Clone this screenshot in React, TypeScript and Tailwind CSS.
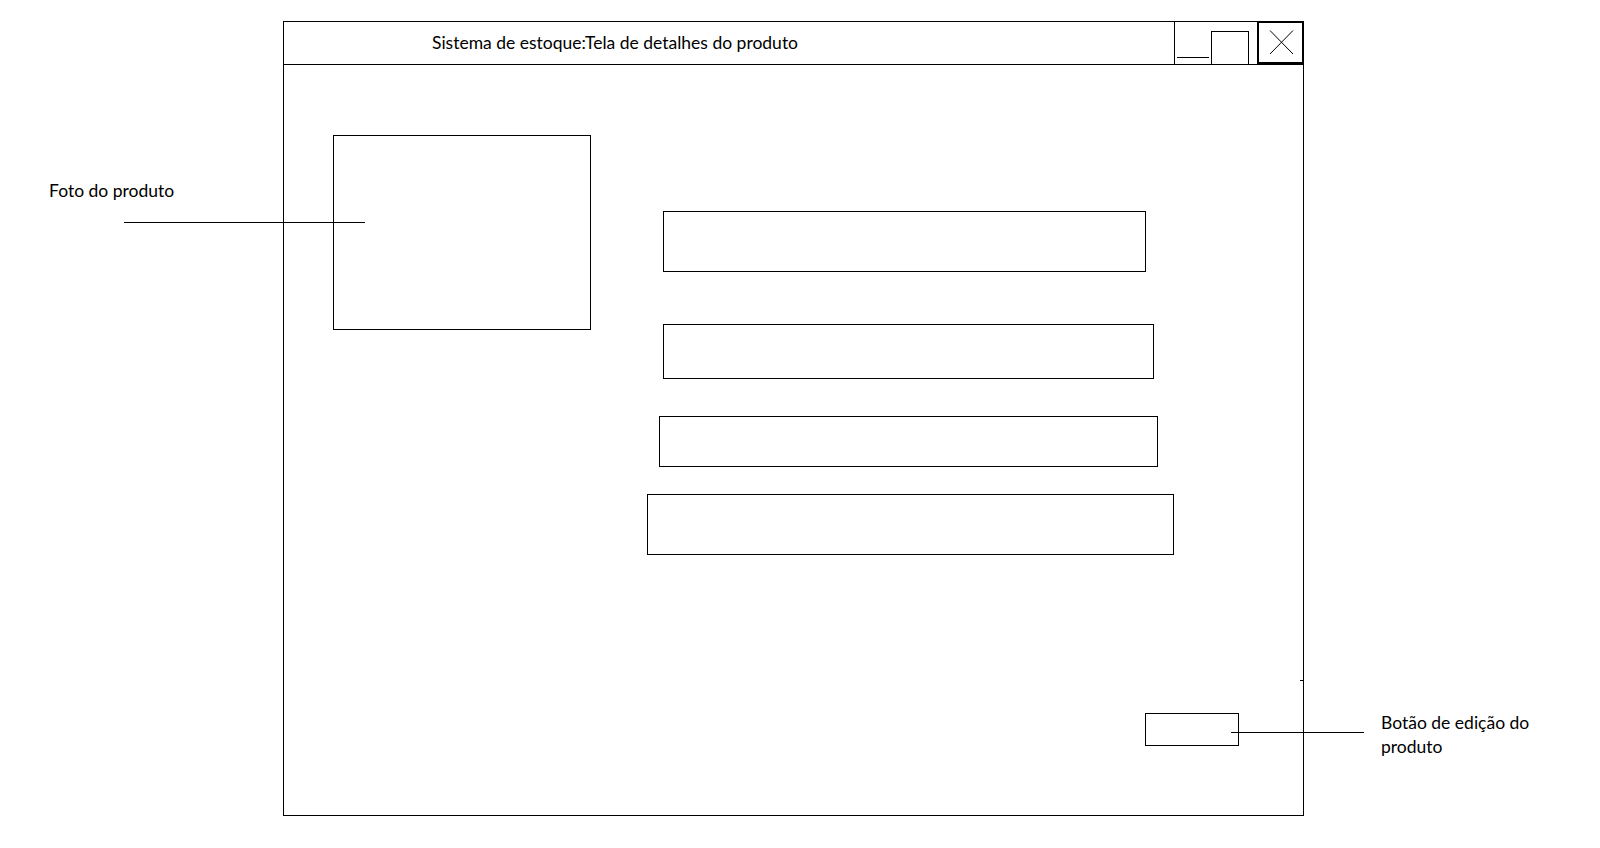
import React from 'react';

function WindowControls() {
  return (
    <div className="flex items-stretch">
      {/* minimizar */}
      <div className="relative w-[37px] border-l border-black">
        <div className="absolute left-[2px] bottom-[6px] h-px w-[32px] bg-black" />
      </div>
      {/* maximizar */}
      <div className="flex w-[38px] flex-col justify-end">
        <div className="h-[33px] border-x border-t border-black" />
      </div>
      <div className="w-[8px]" />
      {/* fechar */}
      <div className="-mt-px -mr-px w-[47px] border-2 border-black">
        <svg width="43" height="41" viewBox="0 0 43 41" className="block">
          <line x1="11" y1="7.5" x2="34" y2="31" stroke="black" strokeWidth="1" />
          <line x1="34" y1="7.5" x2="11" y2="31" stroke="black" strokeWidth="1" />
        </svg>
      </div>
    </div>
  );
}

export default function App() {
  const fields = [
    { w: 'w-[483px]', h: 'h-[61px]', cls: 'ml-[16px]' },
    { w: 'w-[491px]', h: 'h-[55px]', cls: 'ml-[16px] mt-[52px]' },
    { w: 'w-[499px]', h: 'h-[51px]', cls: 'ml-[12px] mt-[37px]' },
    { w: 'w-[527px]', h: 'h-[61px]', cls: 'mt-[27px]' },
  ];

  return (
    <div
      className="relative h-[848px] w-[1600px] overflow-hidden bg-white text-[17.5px] text-black"
      style={{ fontFamily: 'Lato, "Liberation Sans", sans-serif' }}
    >
      <div className="ml-[283px] pt-[21px]">
        <div className="flex h-[795px] w-[1021px] flex-col border border-black">
          {/* barra de título */}
          <div className="flex h-[43px] border-b border-black">
            <div className="flex flex-1 items-center pl-[148px] leading-none">
              Sistema de estoque:Tela de detalhes do produto
            </div>
            <WindowControls />
          </div>

          {/* conteúdo */}
          <div className="flex flex-1 flex-col">
            <div className="flex">
              <div className="ml-[49px] mt-[70px] h-[195px] w-[258px] border border-black" />
              <div className="ml-[56px] mt-[146px] flex flex-col items-start">
                {fields.map((f, i) => (
                  <div key={i} className={`${f.w} ${f.h} ${f.cls} border border-black`} />
                ))}
              </div>
            </div>
            <div className="ml-[861px] mt-[158px] h-[33px] w-[94px] border border-black" />
          </div>
        </div>
      </div>

      {/* anotações */}
      <div className="absolute left-[49px] top-[180px] leading-[22px]">Foto do produto</div>
      <div className="absolute left-[124px] top-[222px] h-px w-[241px] bg-black" />

      <div className="absolute left-[1300px] top-[680px] h-px w-[4px] bg-black" />
      <div className="absolute left-[1231px] top-[732px] h-px w-[133px] bg-black" />
      <div className="absolute left-[1381px] top-[711px] leading-[24px]">
        Botão de edição do
        <br />
        produto
      </div>
    </div>
  );
}
